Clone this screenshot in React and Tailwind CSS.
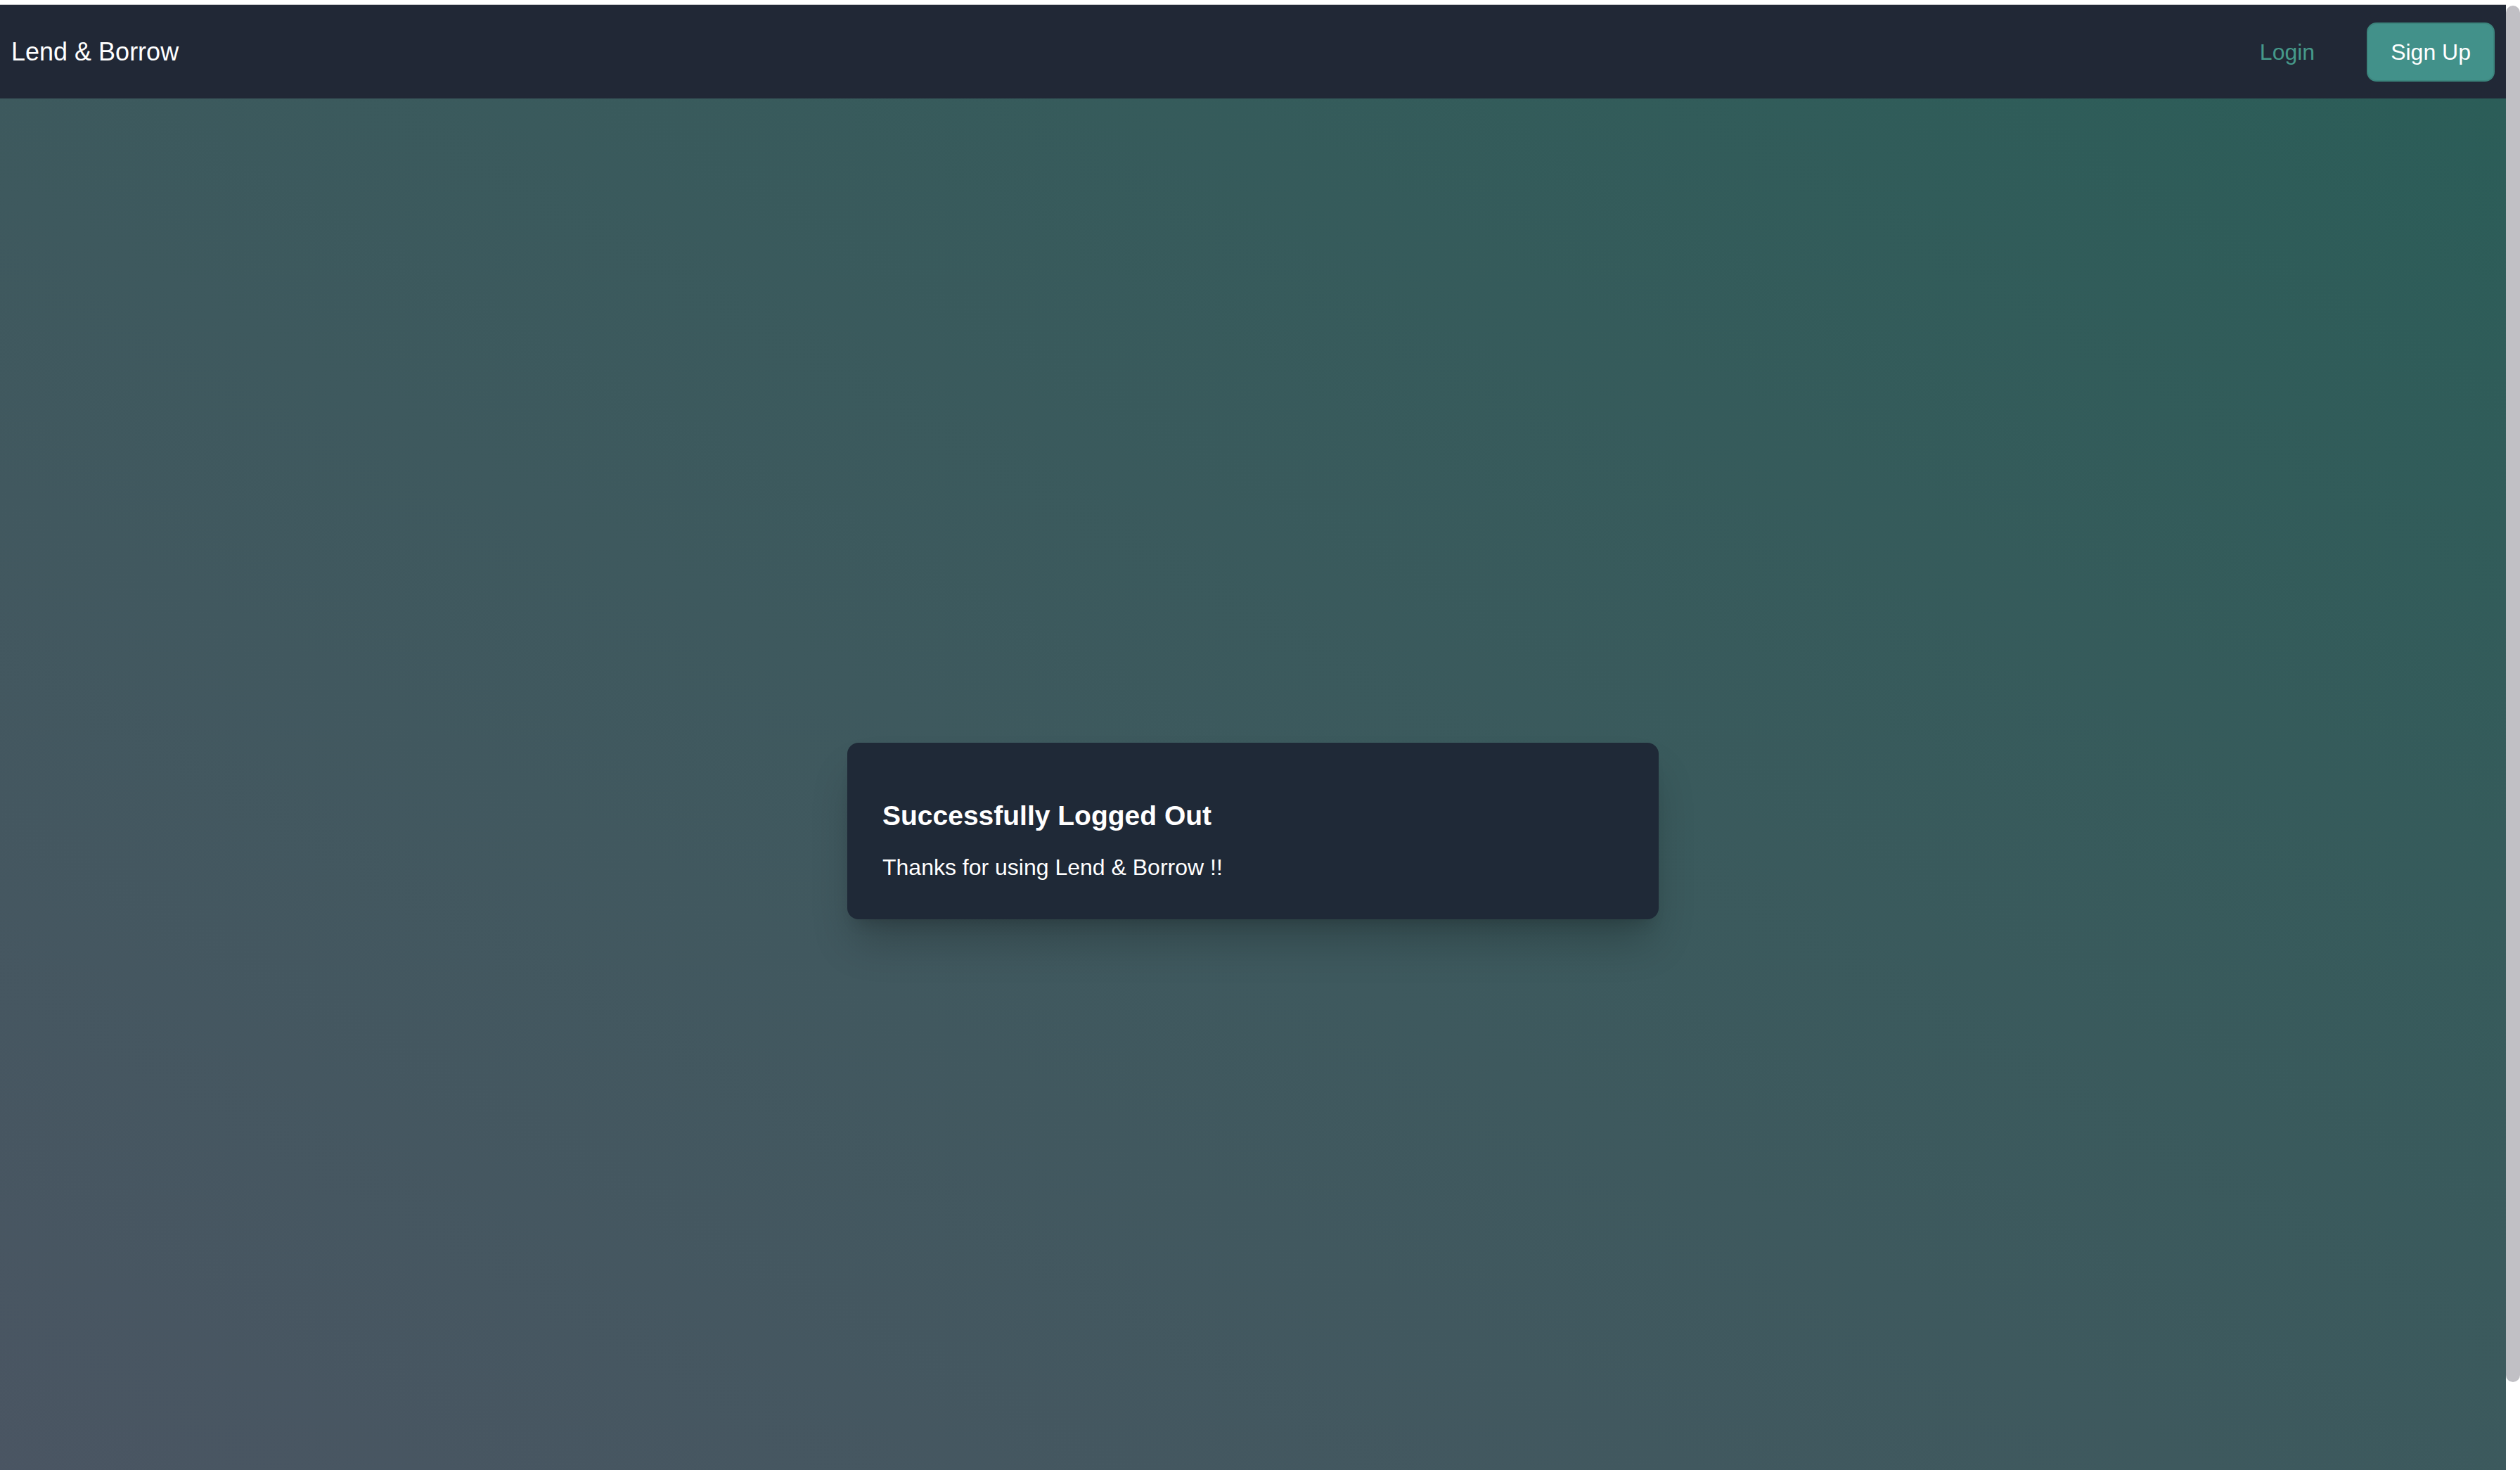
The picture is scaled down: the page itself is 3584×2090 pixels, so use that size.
import React from "react";

export default function App() {
  return (
    <div
      className="h-screen w-full overflow-hidden flex bg-white"
      style={{ fontFamily: '"Liberation Sans", Arial, sans-serif' }}
    >
      <div className="flex-1 min-w-0 flex flex-col">
        <div className="h-[6px] bg-white shrink-0" />
        <div className="h-[1px] bg-[#c8c9cc] shrink-0" />
        <nav className="h-[133px] shrink-0 bg-[#212836] flex items-center justify-between pl-[16px] pr-[16px]">
          <span className="text-white text-[36px] leading-[48px]">Lend &amp; Borrow</span>
          <div className="flex items-center">
            <a href="#" className="text-[#46998a] text-[32px] leading-[48px] mr-[74px]">
              Login
            </a>
            <button className="bg-[#42918a] border-2 border-[#3c857d] rounded-[14px] px-[32px] py-[16px] text-white text-[32px] leading-[48px]">
              Sign Up
            </button>
          </div>
        </nav>
        <main className="h-[2082px] shrink-0 bg-gradient-to-tr from-[#4b5563] to-[#2b5d58] flex items-center justify-center">
          <div className="w-[1154px] bg-[#1f2937] rounded-[16px] pt-[76px] pb-[50px] px-[50px] shadow-[0_40px_60px_-10px_rgba(0,0,0,0.22),0_16px_20px_-12px_rgba(0,0,0,0.15)]">
            <h2 className="text-white font-bold text-[39px] leading-[56px] mb-[21px]">
              Successfully Logged Out
            </h2>
            <p className="text-white text-[32px] leading-[48px]">Thanks for using Lend &amp; Borrow !!</p>
          </div>
        </main>
      </div>
      <div className="w-[20px] shrink-0 bg-white pt-[8px] pb-[125px] flex flex-col">
        <div className="flex-1 bg-[#c1c0c5] rounded-full" />
      </div>
    </div>
  );
}
